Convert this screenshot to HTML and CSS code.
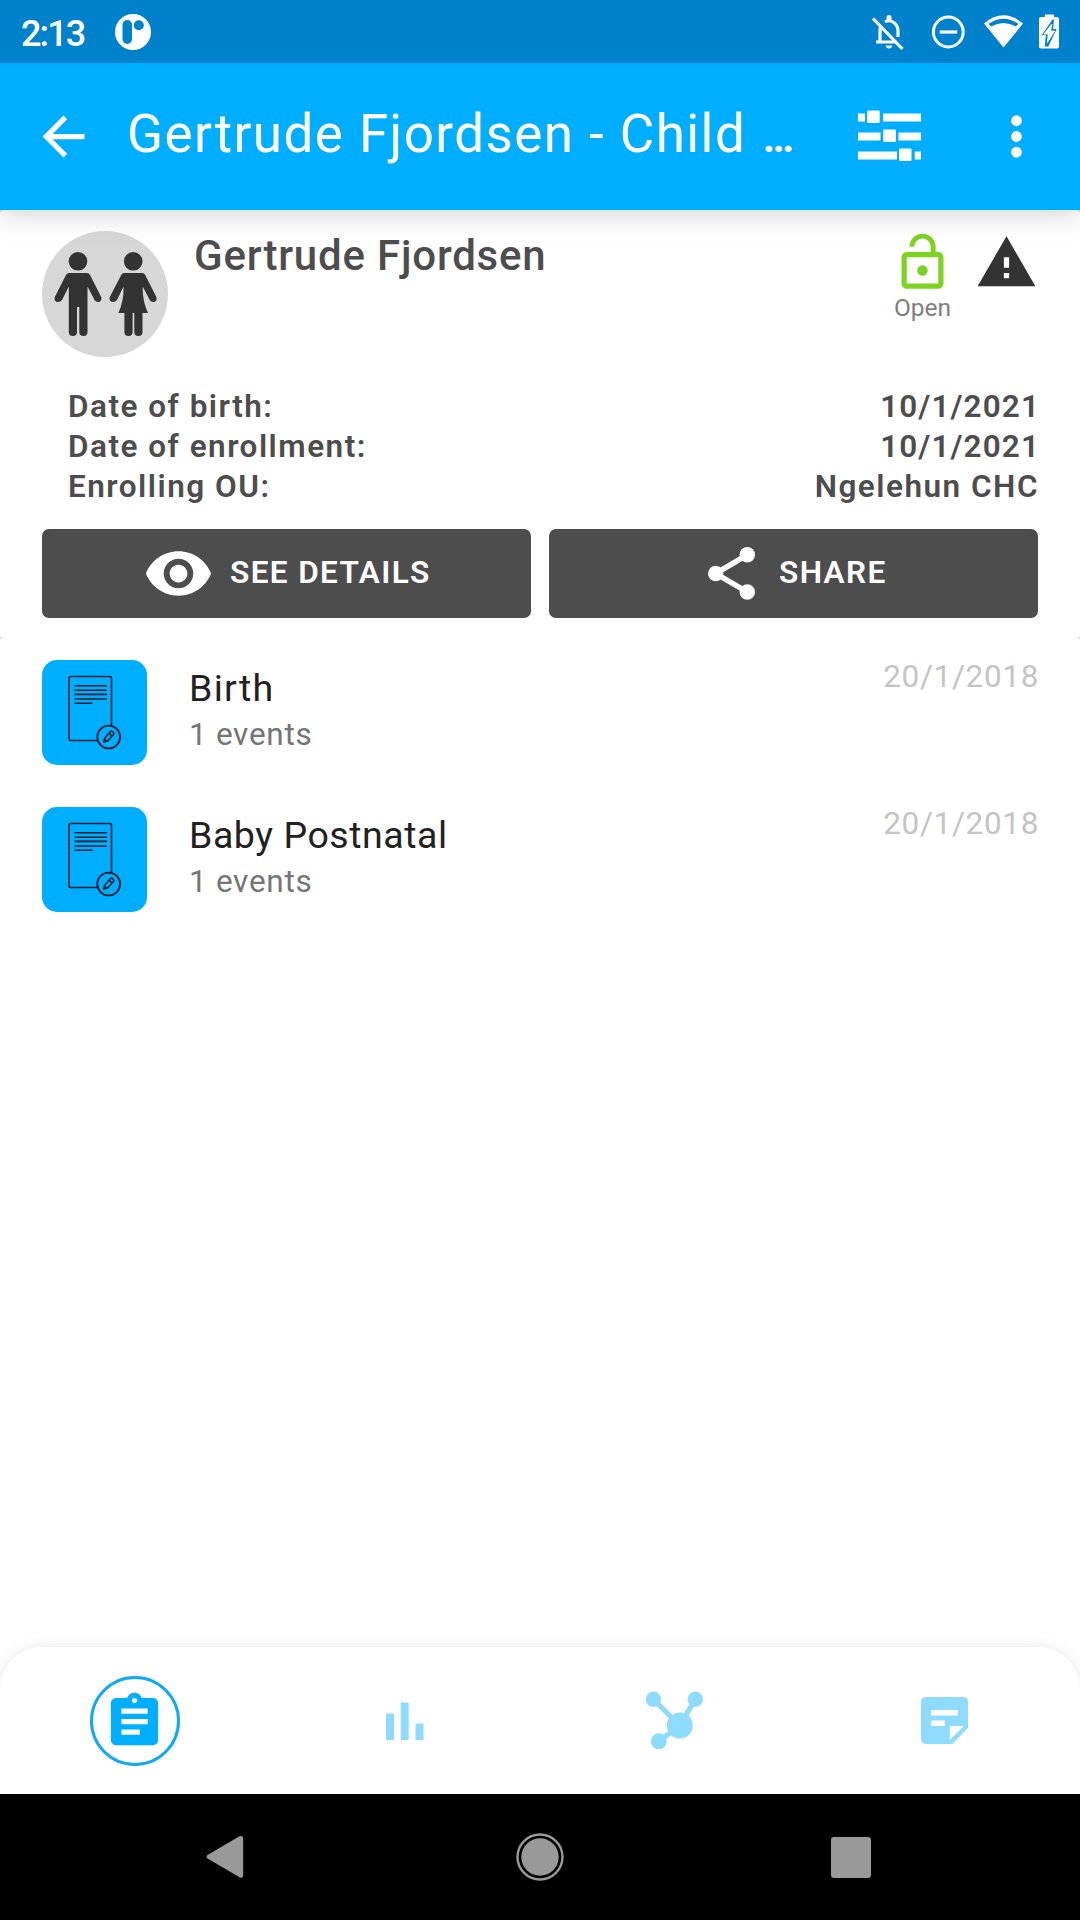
FILE: index.html
```html
<!DOCTYPE html>
<html lang="en">
<head>
<meta charset="utf-8">
<title>Gertrude Fjordsen - Child Programme</title>
<link rel="stylesheet" href="styles.css">
</head>
<body>
<div class="screen">
  <div class="status-bar">
    <span class="clock">2:13</span>
    <svg class="notif" width="38" height="38" viewBox="0 0 38 38"><circle cx="19" cy="19" r="18" fill="#fff"/><rect x="8.5" y="7" width="9.5" height="24" rx="4.7" fill="#0081cc"/><circle cx="24.8" cy="12.3" r="5" fill="#0081cc"/></svg>
    <svg class="system" width="190" height="40" viewBox="0 0 190 40" fill="none" stroke="#fff">
      <g stroke-width="3.200"><path d="M3 6.500l29.500 30.500M6 30H26M10 30V19q0-3 1-5"/><path d="M15 10q4-2.500 8 0 5 3 5 9v6" /></g>
      <path d="M16.500 8V5.500a2.500 2.500 0 0 1 5 0V8zM15.500 33.500h7q-1 3-3.500 3t-3.500-3z" fill="#fff" stroke="none"/>
      <circle cx="78.300" cy="20" r="14.900" stroke-width="3"/><path d="M69.700 20h17.500" stroke-width="3.200"/>
      <path d="M133.500 35.500L114 11.500Q133.500-5 153 11.500z" fill="#fff" stroke="none"/><path d="M118.500 11.800Q133.500 1.500 148.500 11.800L146 14.500Q133.500 7.300 121 14.500z" fill="#0081cc" stroke="none"/>
      <path d="M171 5h4V2.500h9V5h3q2 0 2 2v27.500q0 2-2 2h-16q-2 0-2-2V7q0-2 2-2z" fill="#fff" stroke="none"/>
      <path d="M182.500 7.500L171.800 23h4l-1 11.500h3.500l8.400-17.500h-3.700l1-9.500z" fill="#0081cc" stroke="none"/><path d="M181.800 12L174 22h4.200l-.8 8.500L184.600 19h-4z" fill="#fff" stroke="#fff" stroke-width=".8"/>
    </svg>
  </div>

  <header class="app-bar">
    <svg class="back" width="63" height="63" viewBox="0 0 24 24" fill="#fff"><path d="M20 11H7.830l5.590-5.590L12 4l-8 8 8 8 1.410-1.410L7.830 13H20v-2z"/></svg>
    <h1 class="title">Gertrude Fjordsen - Child <span class="ellipsis">…</span></h1>
    <svg class="tune" width="63" height="53" viewBox="858 109.500 63 53" fill="#fff"><path d="M858 113h7v8h-7zM883 113h38v8h-38zM858 132h22.500v8H858zM898.500 132H921v8h-22.500zM858 151h39v8h-39zM914.700 151h6.300v8h-6.300z"/><rect x="867.200" y="110" width="12.500" height="12.500" rx="1"/><rect x="883.200" y="129" width="12.700" height="12.500" rx="1"/><rect x="899" y="148" width="12.500" height="12.500" rx="1"/></svg>
    <svg class="more" width="63" height="63" viewBox="0 0 24 24" fill="#fff"><circle cx="12" cy="6" r="2.050"/><circle cx="12" cy="12" r="2.050"/><circle cx="12" cy="18" r="2.050"/></svg>
  </header>

  <div class="content">
  <div class="profile-frame">
  <section class="profile">
    <div class="identity">
      <svg class="avatar" width="126" height="126" viewBox="42 231 126 126">
        <circle cx="105" cy="294" r="63" fill="#d7d7d7"/>
        <g fill="#333"><circle cx="78" cy="261.300" r="9.300"/><path d="M69 273h18q2 0 3 2l11.200 22q1 4-2.200 5-3 .5-4.500-2l-7-13.500V332a4.100 4.100 0 0 1-8.200 0V307h-2.300v25a4.100 4.100 0 0 1-8.200 0V286.500L62 300q-2 2.500-5 2-3.300-1-2.200-5L66 275q1-2 3-2z"/>
        <circle cx="133.200" cy="261.300" r="9.300"/><path d="M124.200 273h18q2 0 3 2l11.200 22q1 4-2.200 5-3 .5-4.500-2l-7-13.500q-.3 15 5.300 26.500H142.500v19a4.100 4.100 0 0 1-8.200 0v-19h-1.700v19a4.100 4.100 0 0 1-8.200 0v-19H118.300q5.800-12 5.200-26.500L117 300q-2 2.500-5 2-3.300-1-2.200-5L121.200 275q1-2 3-2z"/></g>
      </svg>
      <h2 class="name">Gertrude Fjordsen</h2>
      <div class="state">
        <svg width="63" height="63" viewBox="0 0 24 24" fill="#7ed321"><path d="M12 17c1.100 0 2-.9 2-2s-.9-2-2-2-2 .9-2 2 .9 2 2 2zm6-9h-1V6c0-2.760-2.240-5-5-5S7 3.240 7 6h1.900c0-1.710 1.390-3.100 3.100-3.100 1.710 0 3.100 1.390 3.100 3.100v2H6c-1.100 0-2 .9-2 2v10c0 1.100.9 2 2 2h12c1.100 0 2-.9 2-2V10c0-1.100-.9-2-2-2zm0 12H6V10h12v10z"/></svg>
        <span class="state-label">Open</span>
      </div>
      <svg class="warning" width="63" height="63" viewBox="0 0 24 24" fill="#333"><path d="M1 21h22L12 2 1 21zm12-3h-2v-2h2v2zm0-4h-2v-4h2v4z"/></svg>
    </div>
    <dl class="facts">
      <div class="fact"><dt>Date of birth:</dt><dd class="date">10/1/2021</dd></div>
      <div class="fact"><dt>Date of enrollment:</dt><dd class="date">10/1/2021</dd></div>
      <div class="fact"><dt>Enrolling OU:</dt><dd>Ngelehun CHC</dd></div>
    </dl>
    <div class="actions">
      <button class="action details">
        <svg width="71" height="71" viewBox="0 0 24 24" fill="#fff"><path d="M12 4.500C7 4.500 2.730 7.610 1 12c1.730 4.390 6 7.500 11 7.500s9.270-3.110 11-7.500c-1.730-4.390-6-7.500-11-7.500zM12 17c-2.760 0-5-2.240-5-5s2.240-5 5-5 5 2.240 5 5-2.240 5-5 5zm0-8c-1.660 0-3 1.340-3 3s1.340 3 3 3 3-1.340 3-3-1.340-3-3-3z"/></svg>
        <span>SEE DETAILS</span>
      </button>
      <button class="action share">
        <svg width="47" height="53" viewBox="708 547 47 53" fill="#fff"><path d="M747.300 554.800L715.700 573.500l31.600 18.500" fill="none" stroke="#fff" stroke-width="5.500"/><circle cx="747.300" cy="554.800" r="7.700"/><circle cx="715.700" cy="573.500" r="7.700"/><circle cx="747.300" cy="592" r="7.700"/></svg>
        <span>SHARE</span>
      </button>
    </div>
  </section>
  </div>

  <main class="stages">
    <article class="stage">
      <svg class="tile" width="105" height="105" viewBox="42 660 105 105"><rect x="42" y="660" width="105" height="105" rx="15" fill="#00aeff"/><g fill="none" stroke="#04202f" stroke-width="1.600"><rect x="69" y="676.500" width="42.500" height="64" rx="2"/><path d="M74.500 685.700h32.500M74.500 690.200h32.500M74.500 694.400h32.500M74.500 699h32.500M74.500 703.300h18"/><circle cx="108.700" cy="737" r="11.400" fill="#00aeff" stroke-width="1.900"/><path d="M104.500 738.500l6-7q1-.8 2.500.5t.5 2.500l-6 6.500-3.500 1z"/><path d="M109 733l3 3"/></g><path d="M103.300 742.800l1.200-4.600 3.200 3z" fill="#04202f"/></svg>
      <div class="stage-text"><h3>Birth</h3><p>1 events</p></div>
      <time>20/1/2018</time>
    </article>
    <article class="stage postnatal">
      <svg class="tile" width="105" height="105" viewBox="42 660 105 105"><rect x="42" y="660" width="105" height="105" rx="15" fill="#00aeff"/><g fill="none" stroke="#04202f" stroke-width="1.600"><rect x="69" y="676.500" width="42.500" height="64" rx="2"/><path d="M74.500 685.700h32.500M74.500 690.200h32.500M74.500 694.400h32.500M74.500 699h32.500M74.500 703.300h18"/><circle cx="108.700" cy="737" r="11.400" fill="#00aeff" stroke-width="1.900"/><path d="M104.500 738.500l6-7q1-.8 2.500.5t.5 2.500l-6 6.500-3.500 1z"/><path d="M109 733l3 3"/></g><path d="M103.300 742.800l1.200-4.600 3.200 3z" fill="#04202f"/></svg>
      <div class="stage-text"><h3>Baby Postnatal</h3><p>1 events</p></div>
      <time>20/1/2018</time>
    </article>
  </main>
  </div>

  <nav class="tabs">
    <div class="tab"><span class="ring"><svg width="63" height="63" viewBox="0 0 24 24" fill="#00aeff"><path d="M19 3h-4.180C14.400 1.840 13.300 1 12 1c-1.300 0-2.400.84-2.820 2H5c-1.100 0-2 .9-2 2v14c0 1.100.9 2 2 2h14c1.100 0 2-.9 2-2V5c0-1.100-.9-2-2-2zm-7 0c.55 0 1 .45 1 1s-.45 1-1 1-1-.45-1-1 .45-1 1-1zm2 14H7v-2h7v2zm3-4H7v-2h10v2zm0-4H7V7h10v2z"/></svg></span></div>
    <div class="tab"><svg width="38" height="38" viewBox="0 0 38 38" fill="#8edbff"><path d="M0 11.500h8V38H0zM14.700 0.500h8V38h-8zM29.500 21.500h8V38h-8z"/></svg></div>
    <div class="tab"><svg width="58" height="60" viewBox="646 1691 58 60" fill="#8edbff"><path d="M653.500 1699.300l26.300 26.200 15.500-26.200M679.800 1725.500l-21 15.800" fill="none" stroke="#8edbff" stroke-width="5.200"/><circle cx="653.500" cy="1699.300" r="7.700"/><circle cx="695.300" cy="1699.300" r="7.700"/><circle cx="679.800" cy="1725.500" r="13"/><circle cx="658.800" cy="1741.300" r="8"/></svg></div>
    <div class="tab"><svg width="63" height="63" viewBox="914 1689 63 63"><path d="M926.500 1697h36.500q5 0 5 5v26l-15.700 16h-25.800q-5.500 0-5.500-5v-37q0-5 5.500-5z" fill="#8edbff"/><path d="M931.200 1710H958v5.500h-26.800zM931.200 1720.500h13.500v5.500h-13.500zM949.800 1726h14l-14 14z" fill="#fff"/></svg></div>
  </nav>

  <div class="system-nav">
    <svg class="nav-back" width="38" height="44" viewBox="0 0 38 44" fill="#999"><path d="M33.500 1.300Q37.200 0 37.200 4V40Q37.200 44 33.500 42.300L1.500 23.500Q-.5 22 1.500 20z"/></svg>
    <svg class="nav-home" width="50" height="50" viewBox="0 0 50 50"><circle cx="25" cy="25" r="22.500" fill="none" stroke="#999" stroke-width="2.400"/><circle cx="25" cy="25" r="18.700" fill="#999"/></svg>
    <span class="nav-recent"></span>
  </div>
</div>
</body>
</html>
```
FILE: styles.css
```css
* { box-sizing: border-box; margin: 0; padding: 0; }
body { background: #fff; font-family: Roboto, "Liberation Sans", sans-serif; }
svg { display: block; flex: none; }

.screen { width: 1080px; height: 1920px; display: flex; flex-direction: column; overflow: hidden; }

.status-bar { height: 63px; flex: none; display: flex; align-items: center; padding-left: 21px; background: #0081cc; color: #fff; position: relative; z-index: 2; }
.clock { width: 93px; font-size: 36px; font-weight: 500; line-height: 40px; letter-spacing: -1.9px; padding-top: 4px; }
.system { margin-left: auto; margin-right: 20px; }

.app-bar { height: 147px; flex: none; display: flex; align-items: center; padding: 0 32px; background: #00aeff; color: #fff; position: relative; z-index: 1; box-shadow: 0 4px 28px rgba(0, 0, 0, .18); }
.title { flex: 1; padding: 0 0 1px 32px; font-size: 53px; font-weight: 400; line-height: 60px; letter-spacing: 1.42px; white-space: nowrap; }
.ellipsis { letter-spacing: 0; font-size: 42px; font-weight: 700; margin-left: 2px; }
.tune { margin-right: 64px; }

.content { flex: 1; }
.profile-frame { height: 428.5px; background: #e2e2e2; }
.profile { height: 428.5px; padding: 21px 42px 0; border-radius: 5px; background: #fff; }
.identity { display: flex; height: 126px; }
.name { flex: 1; margin-left: 26px; font-size: 42px; font-weight: 500; line-height: 49px; letter-spacing: .8px; color: #4d4d4d; }
.state { display: flex; flex-direction: column; align-items: center; margin-right: 21px; }
.state-label { font-size: 24.5px; line-height: 28px; color: #7e7e7e; }
.facts { margin: 30px 0 0 26px; }
.fact { display: flex; justify-content: space-between; height: 40px; font-size: 31.5px; font-weight: 600; line-height: 40px; letter-spacing: 1.5px; color: #4d4d4d; }
.fact dd { margin-right: -1px; }
.fact .date { letter-spacing: 1.1px; margin-right: -2px; }
.actions { display: grid; grid-template-columns: 1fr 1fr; column-gap: 18px; margin-top: 22px; }
.action { height: 89px; display: flex; align-items: center; border: 0; border-radius: 7px; background: #4d4d4d; color: #fff; font: 600 31.5px/36px Roboto, sans-serif; letter-spacing: 1.4px; }
.action span { padding-bottom: 2px; }
.details { padding-left: 101px; gap: 16px; }
.share { padding-left: 159px; gap: 24px; }

.stages { padding-top: .5px; }
.stage { display: flex; height: 147px; padding: 21px 42px; }
.stage-text { flex: 1; margin-left: 42px; padding-top: 4px; }
.stage h3 { height: 49px; font-size: 37.5px; font-weight: 400; line-height: 48px; letter-spacing: 1.3px; color: #212121; }
.postnatal h3 { letter-spacing: .55px; }
.stage p { font-size: 31.5px; line-height: 44px; letter-spacing: .7px; color: #757575; }
.stage time { font-size: 31.5px; line-height: 33px; letter-spacing: .65px; color: #c4c4c4; margin-right: -1px; }

.tabs { height: 147px; flex: none; display: grid; grid-template-columns: repeat(4, 1fr); place-items: center; background: #fff; border-radius: 42px 42px 0 0; box-shadow: 0 0 14px rgba(0, 0, 0, .1); }
.ring { width: 90px; height: 90px; display: grid; place-items: center; padding: 1px 1px 0 0; border: 3px solid #0fa9f4; border-radius: 50%; }

.system-nav { height: 126px; flex: none; display: flex; align-items: center; position: relative; z-index: 1; background: #000; }
.nav-back { margin-left: 206px; }
.nav-home { margin-left: 271px; }
.nav-recent { width: 40px; height: 41px; margin-left: 266px; border-radius: 3px; background: #999; }
```
